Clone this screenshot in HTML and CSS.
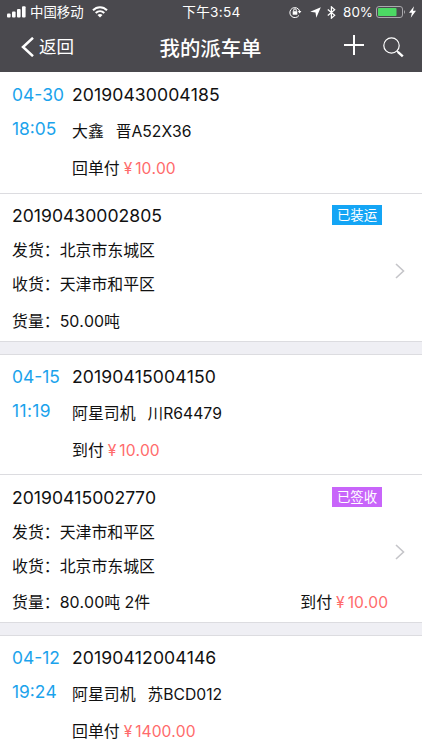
FILE: index.html
```html
<!DOCTYPE html>
<html lang="zh-CN">
<head>
<meta charset="utf-8">
<title>我的派车单</title>
<link rel="stylesheet" href="styles.css">
</head>
<body>
<header class="header">
  <div class="status">
    <div class="status-left">
      <svg class="signal" width="20" height="12" viewBox="0 0 20 12" fill="#fff"><rect x="0" y="7.5" width="3.6" height="4" rx="1"/><rect x="5" y="5.5" width="3.6" height="6" rx="1"/><rect x="10" y="3" width="3.6" height="8.5" rx="1"/><rect x="15" y="0.3" width="3.6" height="11.2" rx="1"/></svg>
      <span class="carrier">中国移动</span>
      <svg class="wifi" width="16" height="12" viewBox="0 0 16 12" fill="none" stroke="#fff" stroke-width="2"><path d="M1 4.300C5 .2 11 .2 15 4.300M3.700 7c2.500-2.400 6.100-2.400 8.600 0"/><path d="M5.500 9c1.500-1.400 3.500-1.400 5 0L8 11.500z" fill="#fff" stroke="none"/></svg>
    </div>
    <div class="clock">下午3:54</div>
    <div class="status-right">
      <svg width="13" height="12" viewBox="0 0 13 12" fill="none" stroke="#fff" stroke-width="1"><path d="M10 9.400A5 5 0 1 1 10.600 5"/><path d="M8.800 5h3.600l-1.800 2.500z" fill="#fff" stroke="none"/><rect x="3.700" y="5.200" width="4.600" height="3.500" fill="#fff" stroke="none"/><path d="M4.700 5.200V4.100a1.300 1.300 0 0 1 2.600 0v1.100"/></svg>
      <svg class="locate" width="11" height="11" viewBox="0 0 11 11" fill="#fff"><path d="M10.800.2 6.300 10.800 5.500 5.500.2 4.700z"/></svg>
      <svg class="bluetooth" width="9" height="13" viewBox="0 0 9 13" fill="none" stroke="#fff" stroke-width="1.200"><path d="M.8 3.500 7.700 9.300 4.400 12.200V.8l3.300 2.900L.8 9.500"/></svg>
      <span class="percent">80%</span>
      <svg class="battery" width="30" height="12" viewBox="0 0 30 12"><rect x=".5" y=".5" width="26" height="11" rx="2.500" fill="none" stroke="#aaa9ad"/><rect x="2" y="2" width="18.500" height="8" rx=".8" fill="#4cd964"/><path d="M28 4q2 2 0 4z" fill="#aaa9ad"/></svg>
      <svg class="bolt" width="7" height="12" viewBox="0 0 6 10" fill="#fff"><path d="M4.300 0 0 5.700h2.500L1.500 10 6 4H3.400z"/></svg>
    </div>
  </div>
  <nav class="nav">
    <div class="back"><svg width="13" height="20" viewBox="0 0 13 20" fill="none" stroke="#fff" stroke-width="2.500"><path d="M12 .8 2 10l10 9.200"/></svg><span>返回</span></div>
    <h1 class="title">我的派车单</h1>
    <div class="actions">
      <svg class="add" width="22" height="22" viewBox="0 0 22 22" stroke="#fff" stroke-width="2"><path d="M11 1v20M1 11h20"/></svg>
      <svg class="search" width="21" height="21" viewBox="0 0 21 21" fill="none" stroke="#fff"><circle cx="8.500" cy="8.500" r="7.700" stroke-width="1.200"/><path d="m13.800 13.800 1.500 1.500" stroke-width="1.200"/><path d="m14.800 14.800 5 4.600" stroke-width="2.400"/></svg>
    </div>
  </nav>
</header>
<main>
  <article class="order">
    <section class="dispatch">
      <div class="when"><div>04-30</div><div>18:05</div></div>
      <div class="info"><div class="number">20190430004185</div><div class="driver"><span>大鑫</span><span>晋A52X36</span></div><div class="pay">回单付<span class="money"><i>¥</i>10.00</span></div></div>
    </section>
    <section class="waybill">
      <div class="number">20190430002805</div><span class="badge shipped">已装运</span>
      <div class="place">发货：北京市东城区</div><div class="place">收货：天津市和平区</div>
      <div class="cargo"><span>货量：50.00吨</span></div>
      <svg class="chevron" width="10" height="16" viewBox="0 0 10 16" fill="none" stroke="#c5c5c9" stroke-width="1.600"><path d="m1 1 7.500 7L1 15"/></svg>
    </section>
  </article>
  <article class="order">
    <section class="dispatch">
      <div class="when"><div>04-15</div><div class="tight">11:19</div></div>
      <div class="info"><div class="number">20190415004150</div><div class="driver"><span>阿星司机</span><span>川R64479</span></div><div class="pay">到付<span class="money"><i>¥</i>10.00</span></div></div>
    </section>
    <section class="waybill">
      <div class="number">20190415002770</div><span class="badge signed">已签收</span>
      <div class="place">发货：天津市和平区</div><div class="place">收货：北京市东城区</div>
      <div class="cargo"><span>货量：80.00吨 2件</span><span>到付<span class="money"><i>¥</i>10.00</span></span></div>
      <svg class="chevron" width="10" height="16" viewBox="0 0 10 16" fill="none" stroke="#c5c5c9" stroke-width="1.600"><path d="m1 1 7.500 7L1 15"/></svg>
    </section>
  </article>
  <article class="order last">
    <section class="dispatch">
      <div class="when"><div>04-12</div><div>19:24</div></div>
      <div class="info"><div class="number">20190412004146</div><div class="driver"><span>阿星司机</span><span>苏BCD012</span></div><div class="pay">回单付<span class="money"><i>¥</i>1400.00</span></div></div>
    </section>
  </article>
</main>
</body>
</html>
```
FILE: styles.css
```css
* { box-sizing: border-box; }
body {
  margin: 0;
  height: 750px;
  overflow: hidden;
  background: #fff;
  color: #111;
  font-family: Inter, "Noto Sans CJK SC", sans-serif;
  font-size: 15.9px;
  font-kerning: none;
  white-space: nowrap;
}
svg { display: block; flex: none; }
.header { height: 72px; background: #4a494e; color: #fff; }
.status {
  display: grid;
  grid-template-columns: 1fr auto 1fr;
  height: 24px;
  padding: 0 6px 0 7px;
  font-size: 13.6px;
  line-height: 24px;
}
.status-left, .status-right { display: flex; align-items: center; }
.status-right { justify-content: flex-end; }
.clock { letter-spacing: .3px; }
.carrier { margin-left: 3px; font-size: 13.4px; }
.wifi { margin-left: 8px; }
.locate { margin-left: 8px; }
.bluetooth { margin-left: 6px; }
.percent { margin-left: 7px; font-size: 13.4px; }
.battery { margin-left: 3px; }
.bolt { margin-left: 3px; }
.nav {
  display: grid;
  grid-template-columns: 1fr auto 1fr;
  align-items: center;
  height: 46px;
  padding: 0 18px 0 21px;
}
.back { display: flex; align-items: center; gap: 5px; font-size: 17.5px; line-height: 24px; }
.title { margin: 0 4px 0 0; font-size: 20.4px; font-weight: 500; }
.actions { display: flex; justify-content: flex-end; align-items: center; gap: 18px; }
.add { margin-top: -4px; }
.order { height: 282px; border-bottom: 12px solid #efeff4; box-shadow: inset 0 -1px #dcdce0; }
.order + .order { height: 281px; border-top: 1px solid #dcdce0; }
.order + .order:not(.last) { height: 281px; }
.order.last { height: 115px; border-bottom: 0; box-shadow: none; }
.dispatch {
  display: flex;
  height: 122px;
  padding: 6px 12px 0;
  border-bottom: 1px solid #dcdce0;
}
.order + .order .dispatch { height: 120px; padding-top: 5px; }
.order.last .dispatch { height: 114px; border-bottom: 0; }
.when { width: 60px; color: #1ba3ec; font-size: 17.4px; line-height: 34px; }
.tight { letter-spacing: .4px; }
.number { font-size: 17.6px; line-height: 34px; }
.info .number { letter-spacing: .08px; }
.driver { display: flex; gap: 12px; margin-top: 1px; line-height: 37px; }
.driver span + span { font-size: 15.7px; }
.pay { line-height: 37px; }
.money { margin-left: 4px; color: #ff6b6b; font-size: 15.6px; }
.money i { margin-right: 3px; font-style: normal; }
.waybill {
  display: grid;
  grid-template-columns: 320px 1fr;
  grid-template-rows: 34px 33.500px 34px 40px;
  position: relative;
  padding: 5px 12px 0;
  align-items: center;
}
.order + .order .waybill { padding-top: 6px; grid-template-rows: 34px 33px 34px 39px; }
.badge {
  width: 50px;
  height: 20px;
  margin-top: -2px;
  color: #fff;
  font-size: 13.4px;
  line-height: 20px;
  text-align: center;
}
.shipped { background: #14a5f5; }
.signed { background: #c865fa; }
.place, .cargo { grid-column: 1 / -1; }
.cargo { display: flex; justify-content: space-between; padding-right: 22px; }
.chevron { position: absolute; right: 17px; top: 69px; }
```
